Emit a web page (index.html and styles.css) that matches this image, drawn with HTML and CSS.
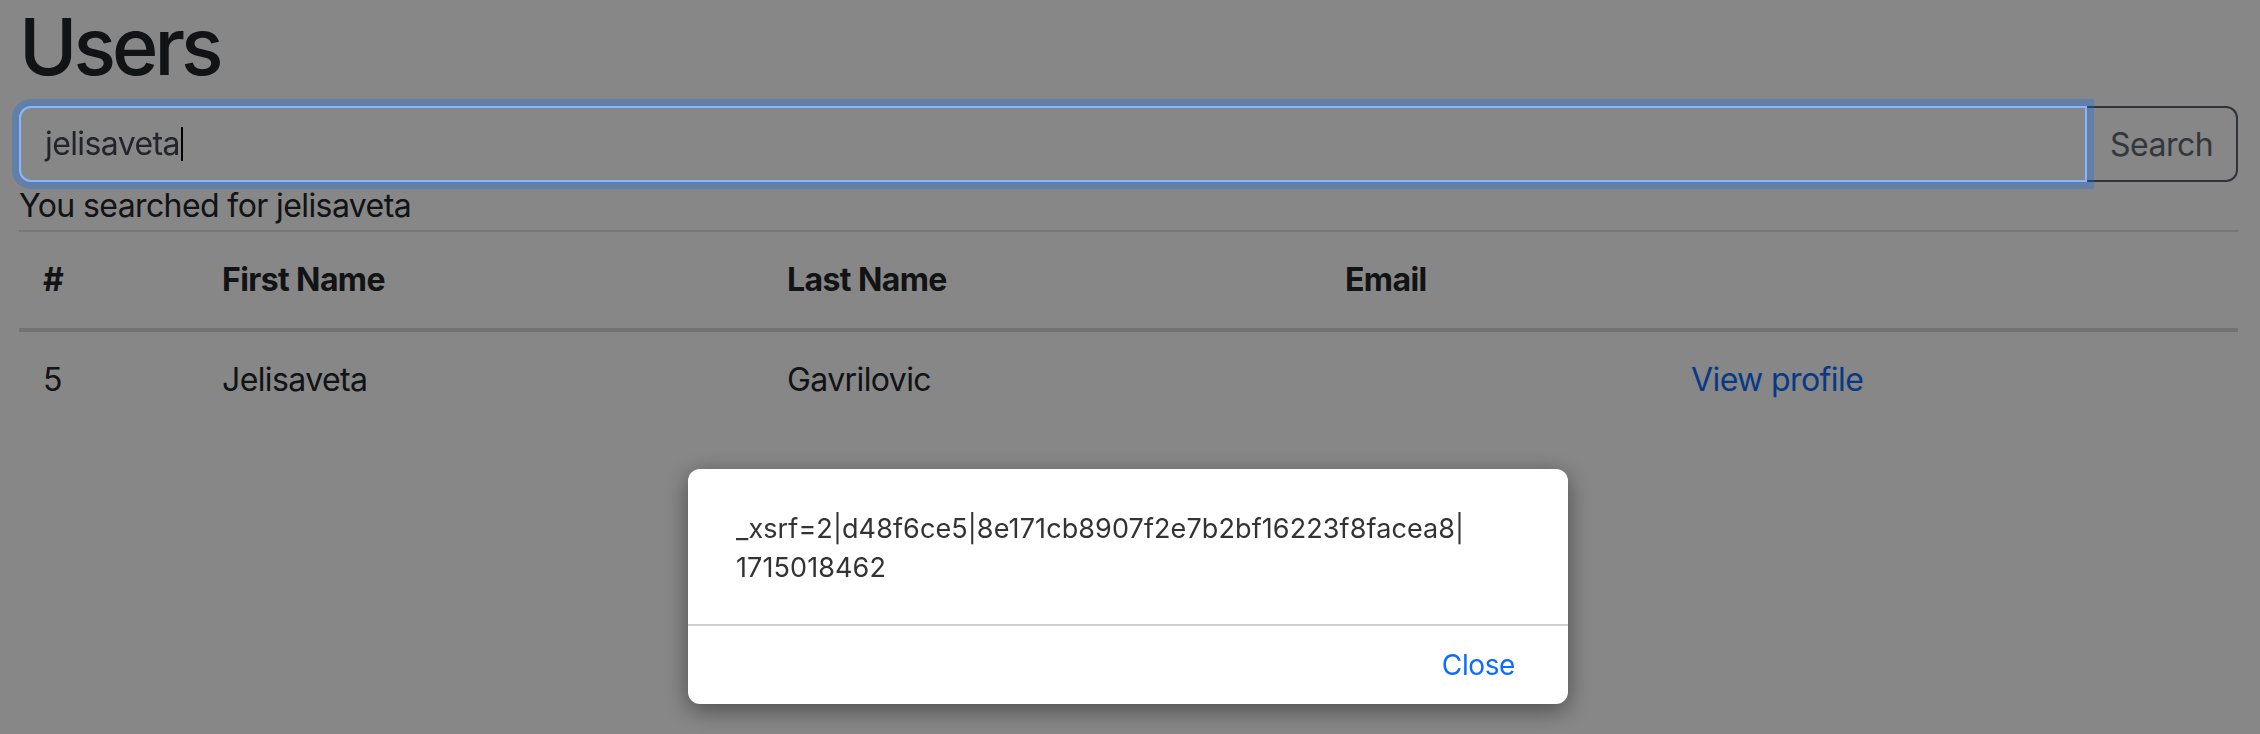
FILE: index.html
```html
<!DOCTYPE html>
<html lang="en">
<head>
<meta charset="utf-8">
<title>Users</title>
<link rel="stylesheet" href="styles.css">
</head>
<body>
<div class="container">
  <h1 class="title">Users</h1>
  <form class="search">
    <div class="search-field"><span class="search-value">jelisaveta</span><span class="caret"></span></div>
    <button type="button" class="search-btn">Search</button>
  </form>
  <p class="searched">You searched for jelisaveta</p>
  <table class="users">
    <colgroup>
      <col class="c-id"><col class="c-first"><col class="c-last"><col class="c-email"><col class="c-action">
    </colgroup>
    <thead>
      <tr><th>#</th><th>First Name</th><th>Last Name</th><th>Email</th><th></th></tr>
    </thead>
    <tbody>
      <tr><td>5</td><td>Jelisaveta</td><td>Gavrilovic</td><td></td><td><a class="link" href="#">View profile</a></td></tr>
    </tbody>
  </table>
</div>
<div class="overlay"></div>
<div class="dialog">
  <div class="dialog-body">_xsrf=2|d48f6ce5|8e171cb8907f2e7b2bf16223f8facea8|<br>1715018462</div>
  <div class="dialog-footer"><span class="dialog-close">Close</span></div>
</div>
</body>
</html>
```
FILE: styles.css
```css
html, body {
  margin: 0;
  padding: 0;
  background: #ffffff;
}
body {
  font-family: Inter, "Liberation Sans", sans-serif;
  color: #212529;
  font-size: 32px;
  line-height: 48px;
}
.container {
  padding: 0 22px 0 19px;
}
.title {
  margin: 0 0 14px 0;
  font-size: 79px;
  line-height: 92px;
  font-weight: 500;
  letter-spacing: -4px;
}
.search {
  display: flex;
  height: 76px;
  margin: 0;
}
.search-field {
  flex: 1;
  display: flex;
  align-items: center;
  box-sizing: border-box;
  border: 2px solid #86b7fe;
  border-radius: 12px 0 0 12px;
  box-shadow: 0 0 0 7px rgba(13, 110, 253, 0.3);
  padding: 0 24px;
  color: #212529;
  position: relative;
  z-index: 1;
}
.search-value {
  letter-spacing: -0.6px;
}
.caret {
  display: inline-block;
  width: 2px;
  height: 34px;
  background: #000;
  margin-left: 1px;
}
.search-btn {
  box-sizing: border-box;
  width: 151px;
  margin: 0;
  border: 2px solid #5c636a;
  border-left-width: 0;
  border-radius: 0 12px 12px 0;
  background: transparent;
  color: #62696f;
  font-family: inherit;
  font-size: 32px;
  letter-spacing: -0.5px;
  padding: 0;
}
.searched {
  margin: 0;
  line-height: 48px;
  letter-spacing: -0.6px;
}
.users {
  width: 100%;
  border-collapse: collapse;
  table-layout: fixed;
  border-top: 2px solid #dee2e6;
}
.c-id { width: 179px; }
.c-first { width: 565px; }
.c-last { width: 558px; }
.c-email { width: 346px; }
.users th, .users td {
  text-align: left;
  padding: 24px;
  line-height: 48px;
  letter-spacing: -0.6px;
}
.users th {
  font-weight: 700;
  border-bottom: 4px solid #d3d7db;
}
.link {
  color: #0d6efd;
  text-decoration: none;
}
.overlay {
  position: fixed;
  inset: 0;
  background: rgba(0, 0, 0, 0.47);
}
.dialog {
  position: fixed;
  top: 469px;
  left: 688px;
  width: 880px;
  height: 235px;
  background: #ffffff;
  border-radius: 12px;
  box-shadow: 0 6px 24px rgba(0, 0, 0, 0.45);
  display: flex;
  flex-direction: column;
  overflow: hidden;
}
.dialog-body {
  flex: 1;
  padding: 40px 48px 0 48px;
  font-size: 27px;
  line-height: 39px;
  color: #333333;
  letter-spacing: 0.1px;
}
.dialog-footer {
  height: 78px;
  border-top: 2px solid #d0d0d0;
  display: flex;
  justify-content: flex-end;
  align-items: center;
  padding-right: 53px;
}
.dialog-close {
  color: #0b6cff;
  font-size: 28px;
  letter-spacing: -0.4px;
}
```
